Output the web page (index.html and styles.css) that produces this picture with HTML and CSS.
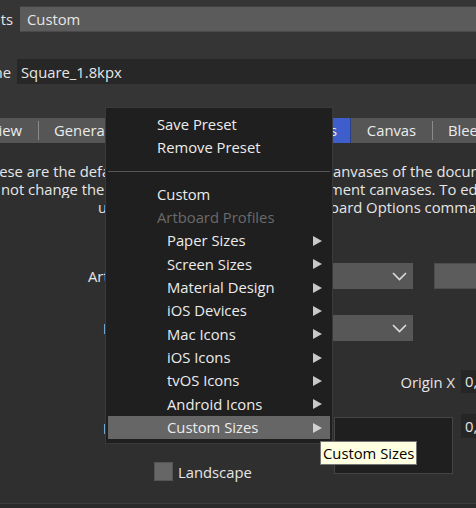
FILE: index.html
```html
<!DOCTYPE html>
<html>
<head>
<meta charset="utf-8">
<link rel="stylesheet" href="styles.css">
</head>
<body>
<div class="dlg">
  <div class="top">
    <div class="frow frow-a">
      <span class="flab">Presets</span>
      <div class="fld fld-light">Custom</div>
    </div>
    <div class="frow frow-b">
      <span class="flab">Name</span>
      <div class="fld fld-dark">Square_1.8kpx</div>
    </div>
  </div>

  <div class="tabs">
    <div class="tab tab-preview">Preview</div>
    <div class="tab tab-general sep">General</div>
    <div class="tab tab-colour sep">Colour</div>
    <div class="tab tab-active">Artboards</div>
    <div class="tab tab-canvas">Canvas</div>
    <div class="tab tab-bleed sep">Bleed</div>
  </div>

  <div class="panel">
    <div class="desc">
      <div class="line line1"><span class="l">These are the default</span><span class="m">settings for all c</span><span class="r">anvases of the document.</span></div>
      <div class="line line2"><span class="l">not change the settings</span><span class="m">of existing docu</span><span class="r">ment canvases. To edit</span></div>
      <div class="line line3"><span class="l">use the Artboard</span><span class="m">the Art</span><span class="r">board Options command.</span></div>
    </div>

    <div class="row row-art">
      <span class="lab">Artboard</span>
      <div class="dd"><span class="chev"><svg width="15" height="9" viewBox="0 0 15 9"><polyline points="1,1 7.5,7.5 14,1" fill="none" stroke="#dcdcdc" stroke-width="1.6"/></svg></span></div>
      <div class="fld-side"></div>
    </div>

    <div class="row row-units">
      <span class="lab">Document units</span>
      <div class="dd"><span class="chev"><svg width="15" height="9" viewBox="0 0 15 9"><polyline points="1,1 7.5,7.5 14,1" fill="none" stroke="#dcdcdc" stroke-width="1.6"/></svg></span></div>
    </div>

    <div class="row row-origin">
      <span class="olab">Origin X</span>
      <div class="nfld">0,0</div>
    </div>

    <div class="row row-prev">
      <div class="leftcol">
        <span class="plab">Preview</span>
        <label class="chk"><span class="box"></span><span>Landscape</span></label>
      </div>
      <div class="pbox"></div>
      <div class="nfld nfld-y">0,0</div>
    </div>
  </div>
  <div class="foot"></div>

  <div class="menu">
    <div class="mi">Save Preset</div>
    <div class="mi">Remove Preset</div>
    <div class="msep"></div>
    <div class="mi">Custom</div>
    <div class="mi mi-dis">Artboard Profiles</div>
    <div class="mi sub">Paper Sizes<span class="arr"><svg width="9" height="10" viewBox="0 0 9 10"><polygon points="0,0 9,5 0,10" fill="#c8c8c8"/></svg></span></div>
    <div class="mi sub">Screen Sizes<span class="arr"><svg width="9" height="10" viewBox="0 0 9 10"><polygon points="0,0 9,5 0,10" fill="#c8c8c8"/></svg></span></div>
    <div class="mi sub">Material Design<span class="arr"><svg width="9" height="10" viewBox="0 0 9 10"><polygon points="0,0 9,5 0,10" fill="#c8c8c8"/></svg></span></div>
    <div class="mi sub">iOS Devices<span class="arr"><svg width="9" height="10" viewBox="0 0 9 10"><polygon points="0,0 9,5 0,10" fill="#c8c8c8"/></svg></span></div>
    <div class="mi sub">Mac Icons<span class="arr"><svg width="9" height="10" viewBox="0 0 9 10"><polygon points="0,0 9,5 0,10" fill="#c8c8c8"/></svg></span></div>
    <div class="mi sub">iOS Icons<span class="arr"><svg width="9" height="10" viewBox="0 0 9 10"><polygon points="0,0 9,5 0,10" fill="#c8c8c8"/></svg></span></div>
    <div class="mi sub">tvOS Icons<span class="arr"><svg width="9" height="10" viewBox="0 0 9 10"><polygon points="0,0 9,5 0,10" fill="#c8c8c8"/></svg></span></div>
    <div class="mi sub">Android Icons<span class="arr"><svg width="9" height="10" viewBox="0 0 9 10"><polygon points="0,0 9,5 0,10" fill="#c8c8c8"/></svg></span></div>
    <div class="mi sub hl">Custom Sizes<span class="arr"><svg width="9" height="10" viewBox="0 0 9 10"><polygon points="0,0 9,5 0,10" fill="#d0d0d0"/></svg></span></div>
  </div>

  <div class="tip">Custom Sizes</div>
</div>
</body>
</html>
```

FILE: styles.css
```css
html, body {
  margin: 0;
  padding: 0;
}
body {
  width: 476px;
  height: 508px;
  overflow: hidden;
  background: #353535;
  font-family: "Open Sans", "Noto Sans", sans-serif;
  font-size: 14.8px;
  color: #e6e6e6;
}
.dlg {
  position: relative;
  width: 476px;
  height: 508px;
  overflow: hidden;
}

/* top fields */
.top {
  padding-top: 6px;
}
.frow {
  display: flex;
  align-items: center;
}
.flab {
  flex-shrink: 0;
  width: 60px;
  text-align: right;
  white-space: nowrap;
}
.frow-a {
  height: 26px;
}
.frow-a .flab {
  margin-left: -47px;
}
.frow-b {
  height: 25px;
  margin-top: 27px;
}
.frow-b .flab {
  margin-left: -49px;
}
.fld {
  flex: 1;
  height: 100%;
  display: flex;
  align-items: center;
  box-sizing: border-box;
}
.fld-light {
  margin-left: 7px;
  padding-left: 7px;
  background: #5b5b5b;
  border-top: 1px solid #404040;
  border-bottom: 1px solid #4a4a4a;
}
.fld-dark {
  margin-left: 6px;
  padding-left: 4px;
  background: #272727;
}

/* tabs */
.tabs {
  margin-top: 34px;
  height: 25px;
  display: flex;
  background: #565656;
  white-space: nowrap;
}
.tab {
  position: relative;
  flex-shrink: 0;
  height: 25px;
  line-height: 25px;
  text-align: center;
  color: #ececec;
  box-sizing: border-box;
}
.tab.sep::before {
  content: "";
  position: absolute;
  left: 0;
  top: 3px;
  bottom: 3px;
  width: 1px;
  background: #8a8a8a;
}
.tab-preview {
  width: 87px;
  margin-left: -49px;
  text-align: right;
  padding-right: 16px;
}
.tab-general {
  width: 87px;
  text-align: left;
  padding-left: 16px;
}
.tab-colour {
  width: 125px;
}
.tab-active {
  width: 101px;
  background: #3d5ecb;
  border-right: 1px solid #2b3f86;
  text-align: right;
  padding-right: 13px;
}
.tab-canvas {
  width: 81px;
}
.tab-bleed {
  width: 80px;
  text-align: left;
  padding-left: 16px;
}

/* panel */
.panel {
  background: #2f2f2f;
  height: 360px;
  padding-top: 19px;
  box-sizing: border-box;
}
.desc {
  line-height: 18px;
}
.line {
  display: flex;
  height: 18px;
  white-space: nowrap;
}
.line .l {
  width: 106px;
  flex-shrink: 0;
  overflow: hidden;
}
.line .m {
  width: 227px;
  flex-shrink: 0;
  overflow: hidden;
}
.line .r {
  flex-shrink: 0;
}
.line1 .l { text-indent: -18px; }
.line2 .l { text-indent: 1px; }
.line3 .l { text-indent: 98px; }
.line1 .r { text-indent: 0; }
.line2 .r { text-indent: -4px; }
.line3 .r { text-indent: -12px; }

.row {
  display: flex;
  align-items: center;
}
.lab {
  width: 240px;
  flex-shrink: 0;
  box-sizing: border-box;
  white-space: nowrap;
  overflow: hidden;
}
.row-art {
  margin-top: 47px;
  height: 26px;
}
.row-art .lab {
  padding-left: 88px;
}
.row-units {
  margin-top: 26px;
  height: 26px;
}
.row-units .lab {
  padding-left: 103px;
}
.dd {
  width: 173px;
  height: 26px;
  flex-shrink: 0;
  background: #575757;
  display: flex;
  align-items: center;
  justify-content: flex-end;
  padding-right: 6px;
  box-sizing: border-box;
}
.chev {
  display: flex;
}
.fld-side {
  margin-left: 21px;
  width: 80px;
  height: 26px;
  flex-shrink: 0;
  background: #5c5c5c;
  border: 1px solid #4c4c4c;
  box-sizing: border-box;
}
.row-origin {
  margin-top: 29px;
  height: 23px;
}
.olab {
  width: 455px;
  flex-shrink: 0;
  text-align: right;
}
.nfld {
  margin-left: 6px;
  width: 60px;
  height: 23px;
  flex-shrink: 0;
  background: #262626;
  line-height: 23px;
  padding-left: 4px;
  box-sizing: border-box;
}
.row-prev {
  margin-top: 21px;
  align-items: flex-start;
}
.leftcol {
  width: 334px;
  flex-shrink: 0;
  display: flex;
  flex-direction: column;
}
.plab {
  margin-top: 3px;
  height: 23px;
  line-height: 23px;
  padding-left: 103px;
}
.chk {
  margin-top: 22px;
  padding-left: 154px;
  display: flex;
  align-items: center;
  gap: 5px;
  height: 19px;
}
.box {
  width: 19px;
  height: 19px;
  box-sizing: border-box;
  background: #666666;
  border: 1px solid #555555;
}
.pbox {
  margin-top: 3px;
  width: 119px;
  height: 57px;
  flex-shrink: 0;
  background: #1f1f1f;
  border: 1px solid #454545;
  box-sizing: border-box;
}
.nfld-y {
  margin-left: 8px;
  height: 24px;
  line-height: 24px;
}
.foot {
  height: 5px;
  background: #2a2a2a;
  border-top: 1px solid #3e3e3e;
}

/* context menu */
.menu {
  position: absolute;
  left: 105px;
  top: 107px;
  width: 228px;
  box-sizing: border-box;
  background: #1f1f1f;
  border: 1px solid #3a3a3a;
  padding: 5px 2px 4px 2px;
}
.mi {
  height: 23.33px;
  line-height: 23.33px;
  padding-left: 49px;
  color: #ececec;
  display: flex;
  align-items: center;
  white-space: nowrap;
}
.mi.sub {
  padding-left: 59px;
  padding-right: 8px;
}
.mi-dis {
  color: #6a6a6a;
}
.arr {
  margin-left: auto;
  display: flex;
}
.hl {
  background: #666666;
}
.msep {
  height: 23px;
  display: flex;
  align-items: center;
}
.msep::before {
  content: "";
  display: block;
  width: 100%;
  height: 1px;
  background: #575757;
}

/* tooltip */
.tip {
  position: absolute;
  left: 320px;
  top: 441px;
  width: 97px;
  height: 24px;
  box-sizing: border-box;
  background: #ffffe1;
  border: 1px solid #767676;
  color: #000;
  line-height: 22px;
  padding-left: 2px;
  white-space: nowrap;
}
```
